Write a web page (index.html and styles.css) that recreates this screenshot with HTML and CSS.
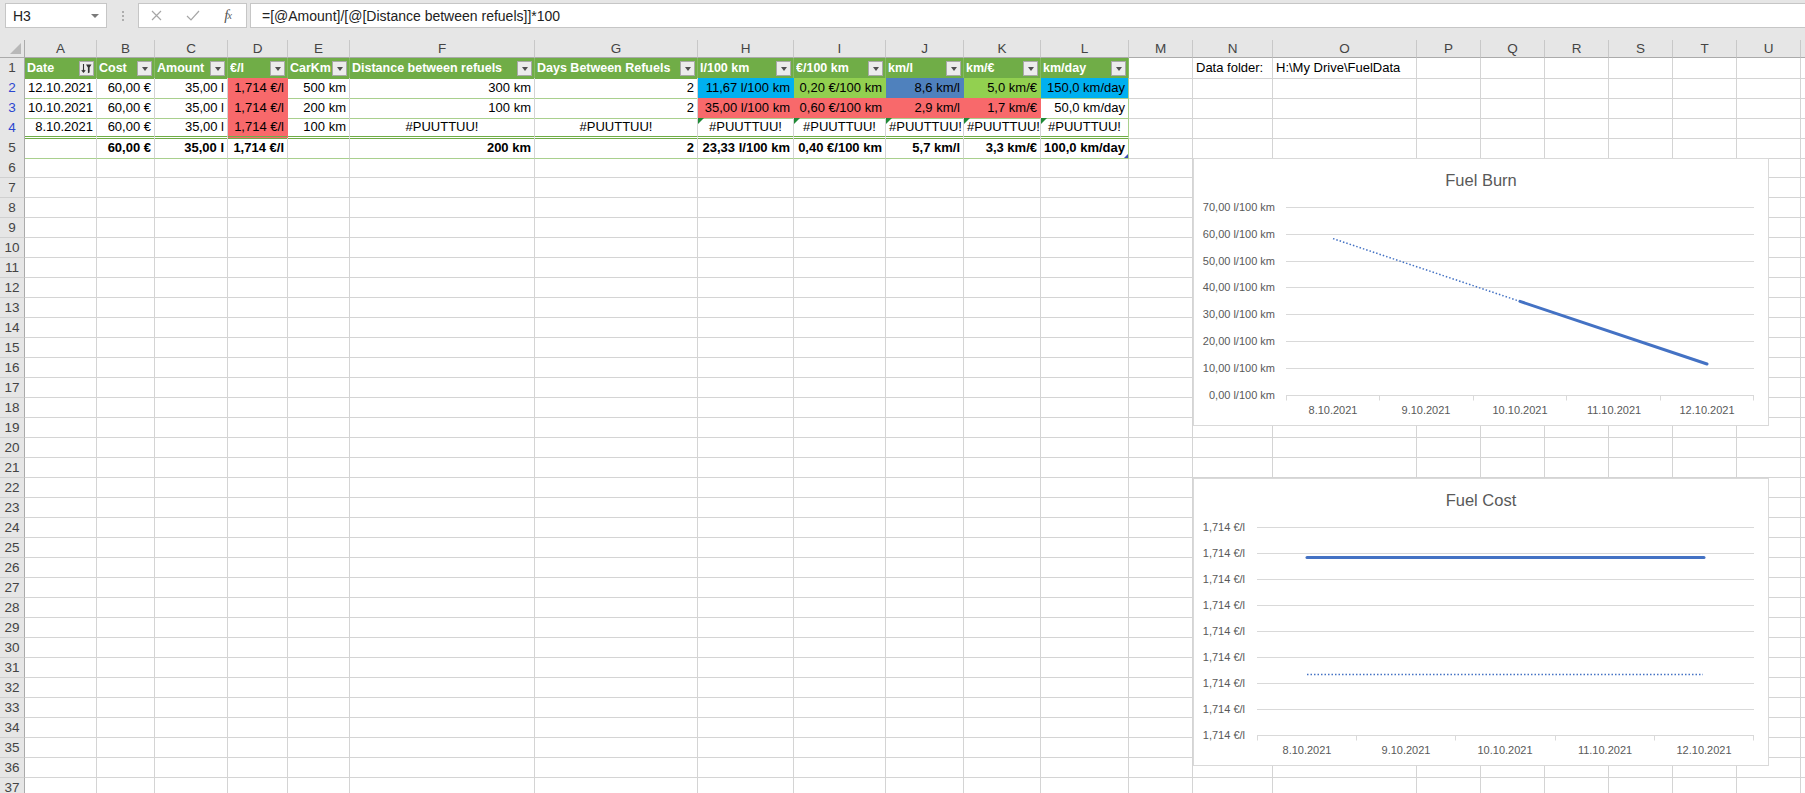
FILE: index.html
```html
<!DOCTYPE html>
<html lang="fi">
<head>
<meta charset="utf-8">
<title>FuelData</title>
<link rel="stylesheet" href="styles.css">
</head>
<body>
<div class="topbar">
  <div class="namebox"><span>H3</span><span class="caret"></span></div>
  <div class="dots"><svg width="4" height="12" viewBox="0 0 4 12"><circle cx="2" cy="2" r="1" fill="#9a9a9a"/><circle cx="2" cy="6" r="1" fill="#9a9a9a"/><circle cx="2" cy="10" r="1" fill="#9a9a9a"/></svg></div>
  <div class="fbuttons">
    <span class="fb"><svg width="11" height="11" viewBox="0 0 11 11"><path d="M1 1L10 10M10 1L1 10" stroke="#a6a6a6" stroke-width="1.2" fill="none"/></svg></span>
    <span class="fb"><svg width="14" height="11" viewBox="0 0 14 11"><path d="M1 6L5 10L13 1" stroke="#a6a6a6" stroke-width="1.2" fill="none"/></svg></span>
    <span class="fb fx"><i>f</i><sub>x</sub></span>
  </div>
  <div class="formula">=[@Amount]/[@[Distance between refuels]]*100</div>
</div>

<div class="sheet">
  <div class="row colhead">
    <div class="corner"></div>
    <div>A</div><div>B</div><div>C</div><div>D</div><div>E</div><div>F</div><div>G</div><div>H</div><div>I</div><div>J</div><div>K</div><div>L</div><div>M</div><div>N</div><div>O</div><div>P</div><div>Q</div><div>R</div><div>S</div><div>T</div><div>U</div><div></div>
  </div>

  <div class="row">
    <div class="rh">1</div>
    <div class="th"><span class="tt">Date</span><span class="fbtn"><svg width="11" height="11" viewBox="0 0 11 11"><path d="M2.5 1V9M0.8 7.2L2.5 9.2L4.2 7.2" stroke="#333" stroke-width="1.1" fill="none"/><path d="M5 1.5H10.5L8.6 4.5V9.5L6.9 10.2V4.5Z" fill="#333"/></svg></span></div>
    <div class="th"><span class="tt">Cost</span><span class="fbtn"><span class="tri"></span></span></div>
    <div class="th"><span class="tt">Amount</span><span class="fbtn"><span class="tri"></span></span></div>
    <div class="th"><span class="tt">€/l</span><span class="fbtn"><span class="tri"></span></span></div>
    <div class="th"><span class="tt">CarKm</span><span class="fbtn"><span class="tri"></span></span></div>
    <div class="th"><span class="tt">Distance between refuels</span><span class="fbtn"><span class="tri"></span></span></div>
    <div class="th"><span class="tt">Days Between Refuels</span><span class="fbtn"><span class="tri"></span></span></div>
    <div class="th"><span class="tt">l/100 km</span><span class="fbtn"><span class="tri"></span></span></div>
    <div class="th"><span class="tt">€/100 km</span><span class="fbtn"><span class="tri"></span></span></div>
    <div class="th"><span class="tt">km/l</span><span class="fbtn"><span class="tri"></span></span></div>
    <div class="th"><span class="tt">km/€</span><span class="fbtn"><span class="tri"></span></span></div>
    <div class="th"><span class="tt">km/day</span><span class="fbtn"><span class="tri"></span></span></div>
    <div class="c"></div>
    <div class="c">Data folder:</div>
    <div class="c">H:\My Drive\FuelData</div>
    <div class="c"></div><div class="c"></div><div class="c"></div><div class="c"></div><div class="c"></div><div class="c"></div><div class="c"></div>
  </div>

  <div class="row">
    <div class="rh flt">2</div>
    <div class="c tb r">12.10.2021</div>
    <div class="c tb r">60,00 €</div>
    <div class="c tb r">35,00 l</div>
    <div class="c tb r red">1,714 €/l</div>
    <div class="c tb r">500 km</div>
    <div class="c tb r">300 km</div>
    <div class="c tb r">2</div>
    <div class="c tb r blue">11,67 l/100 km</div>
    <div class="c tb r grn">0,20 €/100 km</div>
    <div class="c tb r navy">8,6 km/l</div>
    <div class="c tb r grn">5,0 km/€</div>
    <div class="c tb r blue end">150,0 km/day</div>
    <div class="c"></div><div class="c"></div><div class="c"></div><div class="c"></div><div class="c"></div><div class="c"></div><div class="c"></div><div class="c"></div><div class="c"></div><div class="c"></div>
  </div>

  <div class="row">
    <div class="rh flt">3</div>
    <div class="c tb r">10.10.2021</div>
    <div class="c tb r">60,00 €</div>
    <div class="c tb r">35,00 l</div>
    <div class="c tb r red">1,714 €/l</div>
    <div class="c tb r">200 km</div>
    <div class="c tb r">100 km</div>
    <div class="c tb r">2</div>
    <div class="c tb r red">35,00 l/100 km</div>
    <div class="c tb r red">0,60 €/100 km</div>
    <div class="c tb r red">2,9 km/l</div>
    <div class="c tb r red">1,7 km/€</div>
    <div class="c tb r end">50,0 km/day</div>
    <div class="c"></div><div class="c"></div><div class="c"></div><div class="c"></div><div class="c"></div><div class="c"></div><div class="c"></div><div class="c"></div><div class="c"></div><div class="c"></div>
  </div>

  <div class="row">
    <div class="rh flt">4</div>
    <div class="c tb dbl r">8.10.2021</div>
    <div class="c tb dbl r">60,00 €</div>
    <div class="c tb dbl r">35,00 l</div>
    <div class="c tb dbl r red">1,714 €/l</div>
    <div class="c tb dbl r">100 km</div>
    <div class="c tb dbl ctr">#PUUTTUU!</div>
    <div class="c tb dbl ctr">#PUUTTUU!</div>
    <div class="c tb dbl ctr err">#PUUTTUU!</div>
    <div class="c tb dbl ctr err">#PUUTTUU!</div>
    <div class="c tb dbl ctr err">#PUUTTUU!</div>
    <div class="c tb dbl ctr err">#PUUTTUU!</div>
    <div class="c tb dbl ctr err end">#PUUTTUU!</div>
    <div class="c"></div><div class="c"></div><div class="c"></div><div class="c"></div><div class="c"></div><div class="c"></div><div class="c"></div><div class="c"></div><div class="c"></div><div class="c"></div>
  </div>

  <div class="row">
    <div class="rh">5</div>
    <div class="c tb b r"></div>
    <div class="c tb b r">60,00 €</div>
    <div class="c tb b r">35,00 l</div>
    <div class="c tb b r">1,714 €/l</div>
    <div class="c tb b r"></div>
    <div class="c tb b r">200 km</div>
    <div class="c tb b r">2</div>
    <div class="c tb b r">23,33 l/100 km</div>
    <div class="c tb b r">0,40 €/100 km</div>
    <div class="c tb b r">5,7 km/l</div>
    <div class="c tb b r">3,3 km/€</div>
    <div class="c tb b r end handle">100,0 km/day</div>
    <div class="c"></div><div class="c"></div><div class="c"></div><div class="c"></div><div class="c"></div><div class="c"></div><div class="c"></div><div class="c"></div><div class="c"></div><div class="c"></div>
  </div>

  <div class="blank">
    <div class="rownums">
      <div>6</div><div>7</div><div>8</div><div>9</div><div>10</div><div>11</div><div>12</div><div>13</div><div>14</div><div>15</div><div>16</div><div>17</div><div>18</div><div>19</div><div>20</div><div>21</div><div>22</div><div>23</div><div>24</div><div>25</div><div>26</div><div>27</div><div>28</div><div>29</div><div>30</div><div>31</div><div>32</div><div>33</div><div>34</div><div>35</div><div>36</div><div>37</div>
    </div>
    <div class="col"></div><div class="col"></div><div class="col"></div><div class="col"></div><div class="col"></div><div class="col"></div><div class="col"></div><div class="col"></div><div class="col"></div><div class="col"></div><div class="col"></div><div class="col"></div><div class="col"></div><div class="col"></div><div class="col"></div><div class="col"></div><div class="col"></div><div class="col"></div><div class="col"></div><div class="col"></div><div class="col"></div><div class="col"></div>
  </div>

  <div class="chart chart-burn">
    <svg width="576" height="268" viewBox="0 0 576 268">
      <rect x="0.5" y="0.5" width="575" height="267" fill="#fff" stroke="#d9d9d9"/>
      <text class="ctitle" x="288" y="28">Fuel Burn</text>
      <g stroke="#d9d9d9" stroke-width="1">
        <line x1="93" y1="49.5" x2="561" y2="49.5"/>
        <line x1="93" y1="76.5" x2="561" y2="76.5"/>
        <line x1="93" y1="103.5" x2="561" y2="103.5"/>
        <line x1="93" y1="129.5" x2="561" y2="129.5"/>
        <line x1="93" y1="156.5" x2="561" y2="156.5"/>
        <line x1="93" y1="183.5" x2="561" y2="183.5"/>
        <line x1="93" y1="210.5" x2="561" y2="210.5"/>
        <line x1="93" y1="237.5" x2="561" y2="237.5"/>
        <line x1="93.5" y1="237.5" x2="93.5" y2="242.5"/>
        <line x1="186.5" y1="237.5" x2="186.5" y2="242.5"/>
        <line x1="280.5" y1="237.5" x2="280.5" y2="242.5"/>
        <line x1="373.5" y1="237.5" x2="373.5" y2="242.5"/>
        <line x1="467.5" y1="237.5" x2="467.5" y2="242.5"/>
        <line x1="560.5" y1="237.5" x2="560.5" y2="242.5"/>
      </g>
      <g class="ylab">
        <text x="82" y="53">70,00 l/100 km</text>
        <text x="82" y="80">60,00 l/100 km</text>
        <text x="82" y="107">50,00 l/100 km</text>
        <text x="82" y="133">40,00 l/100 km</text>
        <text x="82" y="160">30,00 l/100 km</text>
        <text x="82" y="187">20,00 l/100 km</text>
        <text x="82" y="214">10,00 l/100 km</text>
        <text x="82" y="241">0,00 l/100 km</text>
      </g>
      <g class="xlab">
        <text x="140" y="256">8.10.2021</text>
        <text x="233" y="256">9.10.2021</text>
        <text x="327" y="256">10.10.2021</text>
        <text x="421" y="256">11.10.2021</text>
        <text x="514" y="256">12.10.2021</text>
      </g>
      <line x1="140" y1="80.6" x2="327" y2="143.4" stroke="#4472c4" stroke-width="1.5" stroke-dasharray="1.5 2"/>
      <line x1="327" y1="143.4" x2="514" y2="206" stroke="#4472c4" stroke-width="3" stroke-linecap="round"/>
    </svg>
  </div>

  <div class="chart chart-cost">
    <svg width="576" height="288" viewBox="0 0 576 288">
      <rect x="0.5" y="0.5" width="575" height="287" fill="#fff" stroke="#d9d9d9"/>
      <text class="ctitle" x="288" y="28">Fuel Cost</text>
      <g stroke="#d9d9d9" stroke-width="1">
        <line x1="64" y1="49.5" x2="561" y2="49.5"/>
        <line x1="64" y1="75.5" x2="561" y2="75.5"/>
        <line x1="64" y1="101.5" x2="561" y2="101.5"/>
        <line x1="64" y1="127.5" x2="561" y2="127.5"/>
        <line x1="64" y1="153.5" x2="561" y2="153.5"/>
        <line x1="64" y1="179.5" x2="561" y2="179.5"/>
        <line x1="64" y1="205.5" x2="561" y2="205.5"/>
        <line x1="64" y1="231.5" x2="561" y2="231.5"/>
        <line x1="64" y1="257.5" x2="561" y2="257.5"/>
        <line x1="64.5" y1="257.5" x2="64.5" y2="262.5"/>
        <line x1="163.5" y1="257.5" x2="163.5" y2="262.5"/>
        <line x1="262.5" y1="257.5" x2="262.5" y2="262.5"/>
        <line x1="362.5" y1="257.5" x2="362.5" y2="262.5"/>
        <line x1="461.5" y1="257.5" x2="461.5" y2="262.5"/>
        <line x1="560.5" y1="257.5" x2="560.5" y2="262.5"/>
      </g>
      <g class="ylab">
        <text x="52" y="53">1,714 €/l</text>
        <text x="52" y="79">1,714 €/l</text>
        <text x="52" y="105">1,714 €/l</text>
        <text x="52" y="131">1,714 €/l</text>
        <text x="52" y="157">1,714 €/l</text>
        <text x="52" y="183">1,714 €/l</text>
        <text x="52" y="209">1,714 €/l</text>
        <text x="52" y="235">1,714 €/l</text>
        <text x="52" y="261">1,714 €/l</text>
      </g>
      <g class="xlab">
        <text x="114" y="276">8.10.2021</text>
        <text x="213" y="276">9.10.2021</text>
        <text x="312" y="276">10.10.2021</text>
        <text x="412" y="276">11.10.2021</text>
        <text x="511" y="276">12.10.2021</text>
      </g>
      <line x1="114" y1="79.5" x2="511" y2="79.5" stroke="#4472c4" stroke-width="3" stroke-linecap="round"/>
      <line x1="114" y1="196.5" x2="510" y2="196.5" stroke="#4472c4" stroke-width="1.5" stroke-dasharray="1.5 2"/>
    </svg>
  </div>
</div>
</body>
</html>
```

FILE: styles.css
```css
* { box-sizing: border-box; }
html, body { margin: 0; padding: 0; }
body {
  width: 1805px;
  height: 793px;
  overflow: hidden;
  background: #fff;
  font-family: "Liberation Sans", Arial, sans-serif;
  font-size: 13px;
  color: #000;
}

/* ---------- formula bar ---------- */
.topbar {
  height: 40px;
  background: #e6e6e6;
  display: flex;
  align-items: flex-start;
  padding: 3px 0 0 5px;
}
.namebox {
  width: 102px;
  height: 25px;
  background: #fff;
  border: 1px solid #c6c6c6;
  display: flex;
  align-items: center;
  justify-content: space-between;
  padding: 0 7px 0 7px;
  font-size: 14px;
  color: #222;
}
.caret {
  width: 0; height: 0;
  border-left: 4px solid transparent;
  border-right: 4px solid transparent;
  border-top: 4px solid #7a7a7a;
}
.dots {
  width: 31px;
  height: 25px;
  display: flex;
  align-items: center;
  justify-content: center;
}
.fbuttons {
  width: 109px;
  height: 25px;
  background: #fff;
  border: 1px solid #c6c6c6;
  display: flex;
  align-items: center;
}
.fb {
  width: 36px;
  display: flex;
  align-items: center;
  justify-content: center;
}
.fx {
  font-family: "Liberation Serif", "Times New Roman", serif;
  font-size: 15px;
  color: #555;
  line-height: 1;
}
.fx sub { font-size: 10px; font-style: italic; vertical-align: -1px; margin-left: -1px; }
.formula {
  flex: 1;
  margin-left: 3px;
  height: 25px;
  background: #fff;
  border: 1px solid #c6c6c6;
  border-right: none;
  padding-left: 11px;
  display: flex;
  align-items: center;
  font-size: 14px;
  color: #222;
  white-space: nowrap;
}

/* ---------- sheet ---------- */
.sheet {
  --cols: 25px 72px 58px 73px 60px 62px 185px 163px 96px 92px 78px 77px 88px 64px 80px 144px 64px 64px 64px 64px 64px 64px 64px;
  position: relative;
  width: 1865px;
}
.row {
  display: grid;
  grid-template-columns: var(--cols);
  height: 20px;
}
.colhead { height: 18px; }
.colhead > div {
  background: #e6e6e6;
  border-right: 1px solid #c8c8c8;
  border-bottom: 1px solid #ababab;
  text-align: center;
  line-height: 17px;
  font-size: 13.5px;
  color: #444;
}
.colhead > .corner {
  position: relative;
  border-right: 1px solid #ababab;
}
.corner::after {
  content: "";
  position: absolute;
  right: 3px;
  bottom: 3px;
  width: 0; height: 0;
  border-left: 11px solid transparent;
  border-bottom: 11px solid #b8b8b8;
}

.rh, .rownums > div {
  background: #e6e6e6;
  border-right: 1px solid #ababab;
  border-bottom: 1px solid #d0d0d0;
  text-align: center;
  line-height: 20px;
  font-size: 13.5px;
  color: #444;
}
.rh.flt { color: #2b47d0; }

.c {
  border-right: 1px solid #d4d4d4;
  border-bottom: 1px solid #d4d4d4;
  padding: 0 3px;
  line-height: 19px;
  white-space: nowrap;
  overflow: hidden;
  position: relative;
}
.r { text-align: right; padding-right: 3px; }
.ctr { text-align: center; }
.b { font-weight: bold; }

.tb { border-bottom-color: #a9d08e; }
.tb.end { border-right-color: #a9d08e; }
.dbl { border-bottom: 3px double #70ad47; line-height: 17px; }

.red  { background: #f8696b; border-right-color: #f8696b; }
.blue { background: #00b0f0; border-right-color: #00b0f0; }
.grn  { background: #92d050; border-right-color: #92d050; }
.navy { background: #4f81bd; border-right-color: #4f81bd; }

.err::before {
  content: "";
  position: absolute;
  left: 0;
  top: 0;
  width: 0; height: 0;
  border-top: 6px solid #1f8a36;
  border-right: 6px solid transparent;
}
.handle::after {
  content: "";
  position: absolute;
  right: 0;
  bottom: 0;
  width: 0; height: 0;
  border-bottom: 4px solid #3d4fb5;
  border-left: 4px solid transparent;
}

/* table header row */
.th {
  background: #70ad47;
  border-right: 1px solid #86ba63;
  border-bottom: 1px solid #70ad47;
  color: #fff;
  font-weight: bold;
  font-size: 12.5px;
  display: flex;
  align-items: center;
  padding: 0 2px 0 2px;
  gap: 1px;
  white-space: nowrap;
}
.tt { flex: 1; overflow: hidden; }
.fbtn {
  flex: 0 0 15px;
  width: 15px;
  height: 15px;
  background: #ececec;
  border: 1px solid #a9a9a9;
  display: flex;
  align-items: center;
  justify-content: center;
}
.tri {
  width: 0; height: 0;
  border-left: 3.5px solid transparent;
  border-right: 3.5px solid transparent;
  border-top: 4px solid #505050;
  margin-top: 1px;
}

/* empty part of the sheet */
.blank {
  display: grid;
  grid-template-columns: var(--cols);
  height: 640px;
}
.rownums { display: flex; flex-direction: column; }
.rownums > div { height: 20px; flex: 0 0 20px; }
.col {
  border-right: 1px solid #d4d4d4;
  background: repeating-linear-gradient(to bottom, #fff 0, #fff 19px, #d4d4d4 19px, #d4d4d4 20px);
}

/* charts (floating objects over the grid) */
.chart { position: absolute; left: 1193px; }
.chart svg { display: block; }
.chart-burn { top: 118px; }
.chart-cost { top: 438px; }
.ctitle {
  font-family: "Liberation Sans", Arial, sans-serif;
  font-size: 16.5px;
  fill: #595959;
  text-anchor: middle;
}
.ylab text {
  font-family: "Liberation Sans", Arial, sans-serif;
  font-size: 11px;
  fill: #595959;
  text-anchor: end;
}
.xlab text {
  font-family: "Liberation Sans", Arial, sans-serif;
  font-size: 11px;
  fill: #595959;
  text-anchor: middle;
}
```
